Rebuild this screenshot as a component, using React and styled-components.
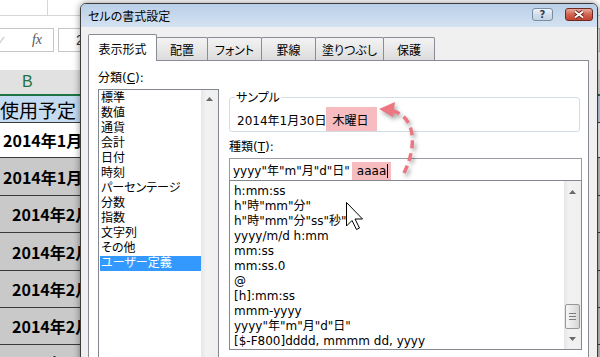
import React from "react";
import styled, { createGlobalStyle } from "styled-components";

const GlobalStyle = createGlobalStyle`
  html, body {
    margin: 0;
    padding: 0;
  }
  body {
    font-family: "DejaVu Sans", "Noto Sans CJK JP", sans-serif;
    font-size: 12px;
    color: #000;
  }
`;

const Screen = styled.div`
  position: relative;
  width: 600px;
  height: 357px;
  overflow: hidden;
  background: #fff;
`;

/* ---------- excel sheet behind the dialog ---------- */

const Sheet = styled.div`
  display: flex;
  flex-direction: column;
  width: 600px;
`;

const RibbonEdge = styled.div`
  display: flex;
  height: 15px;
  border-bottom: 1px solid #d6d6d6;
  margin-bottom: 12px;
`;

const RibbonGroup = styled.div`
  width: 47px;
  border-right: 1px solid #d6d6d6;
`;

const FormulaBar = styled.div`
  display: flex;
  gap: 4px;
  height: 24px;
  margin-bottom: 18px;
`;

const FxBox = styled.div`
  width: 54px;
  box-sizing: border-box;
  border: 1px solid #c6c6c6;
  border-left: none;
  display: flex;
  align-items: center;
  justify-content: space-between;
  padding-right: 11px;
`;

const Check = styled.span`
  color: #c8c8c8;
  font-size: 13px;
  margin-left: -4px;
`;

const Fx = styled.span`
  font-family: "Liberation Serif", serif;
  font-style: italic;
  color: #555;
  font-size: 14px;
`;

const FormulaInput = styled.div`
  flex: 1;
  border: 1px solid #c6c6c6;
  display: flex;
  align-items: center;
  padding-left: 17px;
  font-family: "Liberation Sans", sans-serif;
  font-size: 14px;
  color: #333;
`;

const ColumnHeader = styled.div`
  height: 24px;
  background: #e1e1e1;
  border-bottom: 2px solid #217346;
  display: flex;
  align-items: center;
  padding-left: 22px;
  font-family: "Liberation Sans", sans-serif;
  font-size: 16px;
  color: #217346;
`;

const Cell = styled.div`
  height: ${(p) => p.h}px;
  box-sizing: border-box;
  border-bottom: 1px solid #3a3a3a;
  background: ${(p) => p.bg};
  display: flex;
  align-items: center;
  padding-left: ${(p) => p.indent}px;
  font-family: "Noto Sans CJK JP", sans-serif;
  font-size: 16px;
  font-weight: 700;
  white-space: nowrap;
`;

const HeadCell = styled(Cell)`
  font-size: 19px;
  font-weight: 400;
`;

/* ---------- dialog ---------- */

const Window = styled.div`
  position: absolute;
  left: 80px;
  top: 3px;
  width: 518px;
  height: 380px;
  box-sizing: border-box;
  border: 1px solid #3d3d3d;
  border-radius: 6px 6px 0 0;
  background: #f0f0f0;
  display: flex;
  flex-direction: column;
  box-shadow: 0 0 7px rgba(0, 0, 0, 0.45);
`;

const TitleBar = styled.div`
  height: 23px;
  flex-shrink: 0;
  display: flex;
  align-items: flex-start;
  padding: 0 4px 0 7px;
  background: linear-gradient(#b9cfe8, #d4e2f1);
  border-radius: 5px 5px 0 0;
`;

const Title = styled.div`
  flex: 1;
  line-height: 23px;
  font-family: "Noto Sans CJK JP", sans-serif;
  font-feature-settings: "palt";
`;

const CaptionButtons = styled.div`
  display: flex;
  gap: 12px;
  margin-top: 4px;
`;

const HelpButton = styled.div`
  width: 21px;
  height: 13px;
  box-sizing: border-box;
  border: 1px solid #7b8ea6;
  border-radius: 3px;
  background: linear-gradient(#eef3f9, #d3deeb 50%, #c3d2e4);
  display: flex;
  align-items: center;
  justify-content: center;
  font-family: "DejaVu Sans", sans-serif;
  font-weight: 700;
  font-size: 10px;
  color: #2c3d55;
`;

const CloseButton = styled.div`
  width: 28px;
  height: 13px;
  box-sizing: border-box;
  border: 1px solid #6e2a22;
  border-radius: 3px;
  background: linear-gradient(#e9a99c, #d2634f 50%, #c0432f);
  display: flex;
  align-items: center;
  justify-content: center;
`;

const Body = styled.div`
  flex: 1;
  display: flex;
  flex-direction: column;
  padding: 7px 8px 0 7px;
`;

const TabStrip = styled.div`
  display: flex;
  align-items: flex-end;
  height: 26px;
`;

const Tab = styled.div`
  position: relative;
  z-index: ${(p) => (p.active ? 2 : 1)};
  width: ${(p) => p.w}px;
  height: ${(p) => (p.active ? 27 : 23)}px;
  margin-bottom: ${(p) => (p.active ? -1 : 0)}px;
  margin-left: ${(p) => (p.first ? 0 : -1)}px;
  box-sizing: border-box;
  border: 1px solid #898c95;
  border-bottom: none;
  border-radius: 2px 2px 0 0;
  background: ${(p) =>
    p.active ? "#fff" : "linear-gradient(#f3f3f3, #e8e8e8 50%, #dcdcdc)"};
  display: flex;
  align-items: center;
  justify-content: center;
  padding-top: ${(p) => (p.active ? 0 : 1)}px;
  font-family: "Noto Sans CJK JP", sans-serif;
  font-feature-settings: "palt";
  white-space: nowrap;
`;

const Page = styled.div`
  flex: 1;
  background: #fff;
  border: 1px solid #898c95;
  display: flex;
  gap: 10px;
  padding: 10px 0 0 9px;
`;

const LeftColumn = styled.div`
  width: 121px;
  display: flex;
  flex-direction: column;
`;

const RightColumn = styled.div`
  width: 353px;
  display: flex;
  flex-direction: column;
`;

const Label = styled.div`
  line-height: 15px;
  white-space: nowrap;
  margin-top: ${(p) => p.mt || 0}px;
`;

const ListBox = styled.div`
  margin-top: 3px;
  flex: ${(p) => (p.fill ? 1 : "none")};
  height: ${(p) => (p.h ? `${p.h}px` : "auto")};
  box-sizing: border-box;
  border: 1px solid #828790;
  background: #fff;
  display: flex;
  overflow: hidden;
`;

const Items = styled.div`
  flex: 1;
  padding: ${(p) => p.pad};
  overflow: hidden;
`;

const Item = styled.div`
  height: 15px;
  line-height: 15px;
  padding-left: ${(p) => p.indent}px;
  white-space: nowrap;
  font-feature-settings: "palt";
  background: ${(p) => (p.selected ? "#3399ff" : "transparent")};
  color: ${(p) => (p.selected ? "#fff" : "#000")};
`;

const ScrollBar = styled.div`
  width: 17px;
  flex-shrink: 0;
  display: flex;
  flex-direction: column;
  background: linear-gradient(90deg, #e6e6e6, #f2f2f2 30%, #efefef);
`;

const ScrollArrow = styled.div`
  height: ${(p) => p.h}px;
  display: flex;
  align-items: center;
  justify-content: center;
`;

const Track = styled.div`
  flex: 1;
  display: flex;
  flex-direction: column;
  justify-content: flex-end;
`;

const Thumb = styled.div`
  height: 25px;
  margin: 0 1px;
  box-sizing: border-box;
  border: 1px solid #979797;
  border-radius: 2px;
  background: linear-gradient(90deg, #f6f6f6, #e4e4e4 60%, #d6d6d6);
  display: flex;
  align-items: center;
  justify-content: center;
`;

const Grip = styled.div`
  width: 7px;
  height: 7px;
  background: repeating-linear-gradient(#7c7c7c 0 1px, transparent 1px 3px);
`;

const GroupBox = styled.fieldset`
  margin: 18px 2px 0 0;
  padding: 2px 0 0 5px;
  min-inline-size: 0;
  border: 1px solid #d3dde6;
  border-radius: 3px;
`;

const Legend = styled.legend`
  padding: 0 1px;
  line-height: 16px;
  font-family: "Noto Sans CJK JP", sans-serif;
  font-feature-settings: "palt";
`;

const SampleRow = styled.div`
  height: 24px;
  display: flex;
  align-items: center;
  padding-left: 2px;
  white-space: pre;
`;

const Mark = styled.span`
  align-self: stretch;
  display: flex;
  align-items: center;
  background: #f6bcbf;
  padding: ${(p) => p.pad};
`;

const FormatInput = styled.div`
  margin-top: 3px;
  height: 22px;
  box-sizing: border-box;
  border: 1px solid #9a9ca3;
  border-bottom: none;
  display: flex;
  align-items: stretch;
  padding-left: 3px;
  white-space: pre;
`;

const InputText = styled.span`
  display: flex;
  align-items: center;
`;

const InputMark = styled(Mark)`
  margin-top: 3px;
  margin-left: 2px;
`;

const Caret = styled.span`
  width: 1px;
  height: 14px;
  background: #000;
  margin-left: 1px;
`;

const ArrowOverlay = styled.svg`
  position: absolute;
  left: 370px;
  top: 95px;
  filter: drop-shadow(2px 3px 2px rgba(0, 0, 0, 0.35));
`;

const Pointer = styled.svg`
  position: absolute;
  left: 346px;
  top: 202px;
`;

const rows = [
  { text: "2014年1月", h: 35, bg: "#fff", indent: 3 },
  { text: "2014年1月", h: 38, bg: "#c9c9c9", indent: 3 },
  { text: "2014年2月", h: 37, bg: "#c9c9c9", indent: 12 },
  { text: "2014年2月", h: 38, bg: "#c9c9c9", indent: 12 },
  { text: "2014年2月", h: 37, bg: "#c9c9c9", indent: 12 },
  { text: "2014年2月", h: 37, bg: "#c9c9c9", indent: 12 },
  { text: "2014年2月", h: 37, bg: "#c9c9c9", indent: 12 },
];

const tabs = [
  { label: "表示形式", w: 69 },
  { label: "配置", w: 52 },
  { label: "フォント", w: 55 },
  { label: "罫線", w: 55 },
  { label: "塗りつぶし", w: 69 },
  { label: "保護", w: 52 },
];

const categories = [
  "標準",
  "数値",
  "通貨",
  "会計",
  "日付",
  "時刻",
  "パーセンテージ",
  "分数",
  "指数",
  "文字列",
  "その他",
  "ユーザー定義",
];

const formats = [
  "h:mm:ss",
  'h"時"mm"分"',
  'h"時"mm"分"ss"秒"',
  "yyyy/m/d h:mm",
  "mm:ss",
  "mm:ss.0",
  "@",
  "[h]:mm:ss",
  "mmm-yyyy",
  'yyyy"年"m"月"d"日"',
  "[$-F800]dddd, mmmm dd, yyyy",
];

const UpArrow = () => (
  <svg width="7" height="4" viewBox="0 0 7 4">
    <path d="M0 4 L3.5 0 L7 4 Z" fill="#6a6a6a" />
  </svg>
);

const DownArrow = () => (
  <svg width="7" height="4" viewBox="0 0 7 4">
    <path d="M0 0 L3.5 4 L7 0 Z" fill="#6a6a6a" />
  </svg>
);

const App = () => {
  return (
    <Screen>
      <GlobalStyle />
      <Sheet>
        <RibbonEdge>
          <RibbonGroup />
        </RibbonEdge>
        <FormulaBar>
          <FxBox>
            <Check>✓</Check>
            <Fx>fx</Fx>
          </FxBox>
          <FormulaInput>2014/1/30</FormulaInput>
        </FormulaBar>
        <ColumnHeader>B</ColumnHeader>
        <HeadCell h={27} bg="#c5dbf1" indent={0}>
          使用予定
        </HeadCell>
        {rows.map((r, i) => (
          <Cell key={i} h={r.h} bg={r.bg} indent={r.indent}>
            {r.text}
          </Cell>
        ))}
      </Sheet>

      <Window>
        <TitleBar>
          <Title>セルの書式設定</Title>
          <CaptionButtons>
            <HelpButton>?</HelpButton>
            <CloseButton>
              <svg width="12" height="9" viewBox="0 0 12 9">
                <path d="M2 1.5 L10 7.5 M10 1.5 L2 7.5" stroke="#5e1f18" strokeWidth="3.6" />
                <path d="M2 1.5 L10 7.5 M10 1.5 L2 7.5" stroke="#fff" strokeWidth="2" />
              </svg>
            </CloseButton>
          </CaptionButtons>
        </TitleBar>
        <Body>
          <TabStrip>
            {tabs.map((t, i) => (
              <Tab key={t.label} w={t.w} active={i === 0} first={i === 0}>
                {t.label}
              </Tab>
            ))}
          </TabStrip>
          <Page>
            <LeftColumn>
              <Label>
                分類(<u>C</u>):
              </Label>
              <ListBox fill>
                <Items pad="1px 0 0 1px">
                  {categories.map((c, i) => (
                    <Item key={c} indent={1} selected={i === categories.length - 1}>
                      {c}
                    </Item>
                  ))}
                </Items>
                <ScrollBar>
                  <ScrollArrow h={17}>
                    <UpArrow />
                  </ScrollArrow>
                </ScrollBar>
              </ListBox>
            </LeftColumn>

            <RightColumn>
              <GroupBox>
                <Legend>サンプル</Legend>
                <SampleRow>
                  2014年1月30日 
                  <Mark pad="0 9px 0 6px">木曜日</Mark>
                </SampleRow>
              </GroupBox>
              <Label mt={8}>
                種類(<u>T</u>):
              </Label>
              <FormatInput>
                <InputText>yyyy"年"m"月"d"日"</InputText>
                <InputMark pad="0 3px 0 5px">
                  aaaa
                  <Caret />
                </InputMark>
              </FormatInput>
              <ListBox h={170} style={{ marginTop: 0 }}>
                <Items pad="3px 0 0 4px">
                  {formats.map((f) => (
                    <Item key={f} indent={0}>
                      {f}
                    </Item>
                  ))}
                </Items>
                <ScrollBar>
                  <ScrollArrow h={22}>
                    <UpArrow />
                  </ScrollArrow>
                  <Track>
                    <Thumb>
                      <Grip />
                    </Thumb>
                  </Track>
                  <ScrollArrow h={20}>
                    <DownArrow />
                  </ScrollArrow>
                </ScrollBar>
              </ListBox>
            </RightColumn>
          </Page>
        </Body>
      </Window>

      <ArrowOverlay width="60" height="85" viewBox="0 0 60 85">
        <path
          d="M34 78 C47 52 46 22 23 16"
          fill="none"
          stroke="#ec7681"
          strokeWidth="3.5"
          strokeDasharray="8 5"
        />
        <polygon points="9,14 25,7 23,22" fill="#ec7681" />
      </ArrowOverlay>

      <Pointer width="18" height="29" viewBox="0 0 18 29">
        <polygon
          points="0.5,0.5 0.5,24 6,18.5 10.5,27.5 13.5,26 9,17 16.5,17"
          fill="#fff"
          stroke="#000"
          strokeWidth="1"
          strokeLinejoin="round"
        />
      </Pointer>
    </Screen>
  );
};

export default App;
